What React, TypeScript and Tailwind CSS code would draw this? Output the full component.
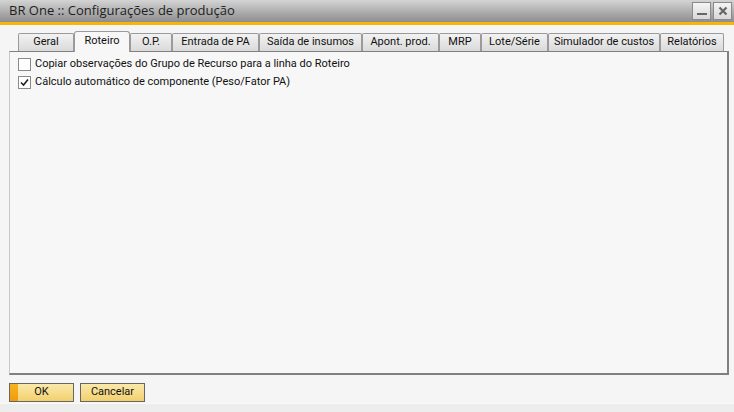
import React from "react";

const tabs = [
  { label: "Geral", w: 56 },
  { label: "Roteiro", w: 56, active: true },
  { label: "O.P.", w: 42 },
  { label: "Entrada de PA", w: 87 },
  { label: "Saída de insumos", w: 103 },
  { label: "Apont. prod.", w: 77 },
  { label: "MRP", w: 42 },
  { label: "Lote/Série", w: 67 },
  { label: "Simulador de custos", w: 112 },
  { label: "Relatórios", w: 64 },
];

function Check({ checked }: { checked?: boolean }) {
  return (
    <span className="w-[13px] h-[13px] border border-[#8a8a8a] bg-white flex items-center justify-center shrink-0">
      {checked && (
        <svg width="9" height="9" viewBox="0 0 9 9">
          <path d="M1 4.5 L3.5 7 L8 1.5" fill="none" stroke="#222" strokeWidth="1.6" />
        </svg>
      )}
    </span>
  );
}

export default function App() {
  return (
    <div className="w-[734px] h-[412px] bg-[#f5f5f5] flex flex-col overflow-hidden text-[#111]" style={{ fontFamily: "Roboto, 'Liberation Sans', sans-serif" }}>
      {/* title bar */}
      <div className="h-[22px] bg-gradient-to-b from-[#d4d4d4] to-[#8e8e8e] flex items-center justify-between pl-[9px] pr-[2px]">
        <span className="text-[13px] text-[#1e1e1e]" style={{ fontFamily: "'Open Sans', sans-serif" }}>BR One :: Configurações de produção</span>
        <div className="flex gap-[2px]">
          <button className="w-[19px] h-[18px] border border-[#8a8a8a] bg-gradient-to-b from-[#f4f4f4] to-[#d8d8d8] flex items-end justify-center pb-[4px]">
            <span className="block w-[10px] h-[2px] bg-[#666]" />
          </button>
          <button className="w-[19px] h-[18px] border border-[#8a8a8a] bg-gradient-to-b from-[#f4f4f4] to-[#d8d8d8] flex items-center justify-center">
            <svg width="10" height="10" viewBox="0 0 10 10">
              <path d="M1.5 1.5 L8.5 8.5 M8.5 1.5 L1.5 8.5" stroke="#666" strokeWidth="2.2" />
            </svg>
          </button>
        </div>
      </div>
      <div className="h-[3px] bg-[#f5b50c]" />

      {/* content */}
      <div className="flex-1 flex flex-col px-[9px] pt-[5px]">
        <div className="flex items-end pl-[9px] h-[21px] relative z-10">
          {tabs.map((t) => (
            <div
              key={t.label}
              style={{ width: t.w }}
              className={
                t.active
                  ? "h-[21px] -mb-px border border-[#9a9a9a] border-b-0 rounded-t-[3px] bg-[#f7f7f7] flex items-center justify-center text-[11px] text-[#111] pb-[2px] whitespace-nowrap"
                  : "h-[18px] border border-[#9a9a9a] border-b-0 rounded-t-[2px] bg-gradient-to-b from-[#f2f2f2] to-[#dadada] flex items-center justify-center text-[11px] text-[#111] whitespace-nowrap"
              }
            >
              {t.label}
            </div>
          ))}
        </div>
        <div className="h-[324px] w-[720px] bg-[#f7f7f7] border border-[#808080] border-l-[#c8c8c8] border-r-2 border-b-2 flex flex-col gap-[5px] pt-[6px] pl-[8px] text-[11px]">
          <label className="flex items-center gap-[4px] h-[13px]">
            <Check />
            <span>Copiar observações do Grupo de Recurso para a linha do Roteiro</span>
          </label>
          <label className="flex items-center gap-[4px] h-[13px]">
            <Check checked />
            <span>Cálculo automático de componente (Peso/Fator PA)</span>
          </label>
        </div>
        <div className="flex gap-[6px] mt-[8px]">
          <button className="relative w-[65px] h-[19px] border border-[#666] bg-gradient-to-b from-[#fbe9a8] to-[#f2d06e] text-[11px] overflow-hidden">
            <span className="absolute left-0 top-0 bottom-0 w-[8px] bg-gradient-to-b from-[#f6b21c] to-[#f39a0c]" />
            OK
          </button>
          <button className="w-[65px] h-[19px] border border-[#666] bg-gradient-to-b from-[#fbe9a8] to-[#f2d06e] text-[11px]">
            Cancelar
          </button>
        </div>
      </div>
      <div className="h-[9px] bg-[#ededed] border-t border-[#f9f9f9]" />
    </div>
  );
}
